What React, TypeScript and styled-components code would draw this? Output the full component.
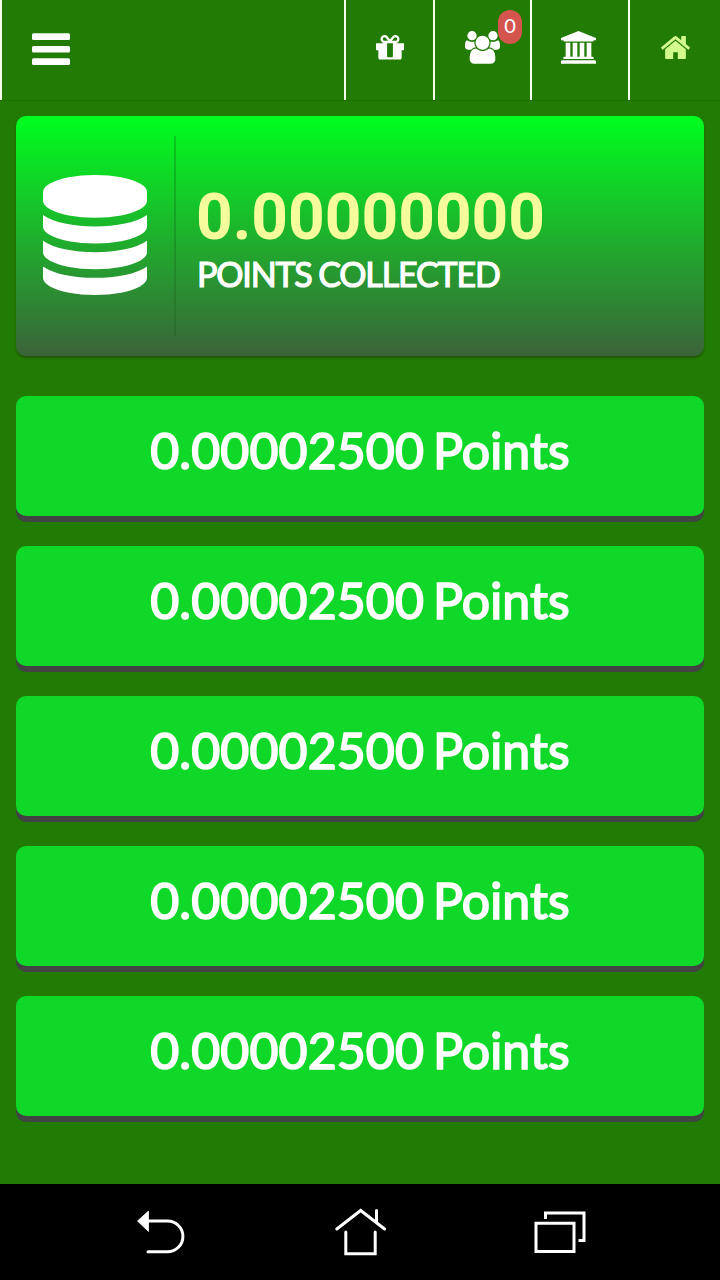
import React from "react";
import styled, { createGlobalStyle } from "styled-components";

const GlobalStyle = createGlobalStyle`
  * { box-sizing: border-box; }
  body { margin: 0; background: #227b04; }
`;

const Screen = styled.div`
  width: 720px;
  height: 1280px;
  display: flex;
  flex-direction: column;
  overflow: hidden;
  background: #227b04;
  color: #fff;
  font-family: Lato, sans-serif;
`;

const Header = styled.header`
  height: 100px;
  flex: none;
  display: flex;
  box-shadow: 0 1px 1px rgba(0, 40, 0, 0.12);
`;

const MenuButton = styled.div`
  flex: 1;
  border-left: 2px solid #f4ffec;
  padding: 33px 0 0 30px;
`;

const Tab = styled.div<{ $width: number; $top: number; $left: number; $active?: boolean }>`
  position: relative;
  width: ${(p) => p.$width}px;
  border-left: 2px solid #f4ffec;
  padding: ${(p) => p.$top}px 0 0 ${(p) => p.$left}px;
  color: ${(p) => (p.$active ? "#d2fa8c" : "#fff")};
`;

const Badge = styled.span`
  position: absolute;
  left: 63px;
  top: 10px;
  width: 24px;
  height: 34px;
  border-radius: 12px;
  background: #d3554d;
  color: #fff;
  font-size: 20px;
  line-height: 30px;
  text-align: center;
`;

const Icon = styled.svg`
  display: block;
  fill: currentColor;
`;

const Main = styled.main`
  flex: 1;
  padding: 16px;
`;

const Card = styled.section`
  height: 240px;
  display: flex;
  padding: 20px 0;
  border-radius: 10px;
  background: linear-gradient(#00ff1f, #3b6339);
  box-shadow: 0 2px 2px rgba(30, 60, 10, 0.6);
`;

const CardIcon = styled.div`
  width: 160px;
  padding: 39px 0 0 27px;
  border-right: 2px solid rgba(20, 90, 20, 0.27);
`;

const CardBody = styled.div`
  padding: 45px 0 0 20px;
`;

const Amount = styled.div`
  font: 700 64px/74px Roboto, sans-serif;
  color: #f5fc9b;
`;

const Caption = styled.div`
  padding-left: 1px;
  font-size: 34px;
  line-height: 38px;
  letter-spacing: -1.15px;
  word-spacing: -1px;
  white-space: nowrap;
  -webkit-text-stroke: 1.2px #fff;
`;

const Rewards = styled.div`
  display: flex;
  flex-direction: column;
  gap: 30px;
  margin-top: 40px;
`;

const Reward = styled.button`
  height: 120px;
  border: 0;
  padding: 0 0 13px;
  border-radius: 10px;
  background: #10d828;
  box-shadow: 0 6px 0 #414443;
  color: #fff;
  font: 400 50px/62px Lato, sans-serif;
  letter-spacing: 0.1px;
  word-spacing: -4px;
  -webkit-text-stroke: 1.7px #fff;
`;

const NavBar = styled.nav`
  height: 96px;
  flex: none;
  display: flex;
  justify-content: space-between;
  align-items: flex-start;
  padding: 24px 132px 0 134px;
  background: #000;
`;

const NavIcon = styled.svg`
  fill: none;
  stroke: #fff;
  stroke-width: 3;
`;

const paths = {
  gift: "M1056 1356v-716h-320v716q0 25 18 38.5t46 13.5h192q28 0 46-13.5t18-38.5zm-456-844h195l-126-161q-26-31-69-31-40 0-68 28t-28 68 28 68 68 28zm688-96q0-40-28-68t-68-28q-43 0-69 31l-125 161h194q40 0 68-28t28-68zm376 256v320q0 14-9 23t-23 9h-96v416q0 40-28 68t-68 28h-1088q-40 0-68-28t-28-68v-416h-96q-14 0-23-9t-9-23v-320q0-14 9-23t23-9h440q-93 0-158.5-65.5t-65.5-158.5 65.5-158.5 158.5-65.5q107 0 168 77l128 165 128-165q61-77 168-77 93 0 158.5 65.5t65.5 158.5-65.5 158.5-158.5 65.5h440q14 0 23 9t9 23z",
  users: "M657 896q-162 5-265 128h-134q-82 0-138-40.5t-56-118.5q0-353 124-353 6 0 43.5 21t97.5 42.5 119 21.5q67 0 133-23-5 37-5 66 0 139 81 256zm1071 637q0 120-73 189.5t-194 69.5h-874q-121 0-194-69.5t-73-189.5q0-53 3.5-103.5t14-109 26.5-108.5 43-97.5 62-81 85.5-53.5 111.5-20q10 0 43 21.5t73 48 107 48 135 21.5 135-21.5 107-48 73-48 43-21.5q61 0 111.5 20t85.5 53.5 62 81 43 97.5 26.5 108.5 14 109 3.5 103.5zm-1024-1277q0 106-75 181t-181 75-181-75-75-181 75-181 181-75 181 75 75 181zm704 384q0 159-112.5 271.5t-271.5 112.5-271.5-112.5-112.5-271.5 112.5-271.5 271.5-112.5 271.5 112.5 112.5 271.5zm576 225q0 78-56 118.5t-138 40.5h-134q-103-123-265-128 81-117 81-256 0-29-5-66 66 23 133 23 59 0 119-21.5t97.5-42.5 43.5-21q124 0 124 353zm-128-609q0 106-75 181t-181 75-181-75-75-181 75-181 181-75 181 75 75 181z",
  bank: "M960 0l960 384v128h-128q0 26-20.5 45t-48.5 19h-1526q-28 0-48.5-19t-20.5-45h-128v-128zm-704 640h256v768h128v-768h256v768h128v-768h256v768h128v-768h256v768h59q28 0 48.5 19t20.5 45v64h-1664v-64q0-26 20.5-45t48.5-19h59v-768zm1595 960q28 0 48.5 19t20.5 45v128h-1920v-128q0-26 20.5-45t48.5-19h1782z",
  home: "M1472 992v480q0 26-19 45t-45 19h-384v-384h-256v384h-384q-26 0-45-19t-19-45v-480q0-1 .5-3t.5-3l575-474 575 474q1 2 1 6zm223-69l-62 74q-8 9-21 11h-3q-13 0-21-7l-692-577-692 577q-12 8-24 7-13-2-21-11l-62-74q-8-10-7-23.5t11-21.5l719-599q32-26 76-26t76 26l244 204v-195q0-14 9-23t23-9h192q14 0 23 9t9 23v408l219 182q10 8 11 21.5t-7 23.5z",
  database: "M896 768q237 0 443-43t325-127v170q0 69-103 128t-280 93.5-385 34.5-385-34.5-280-93.5-103-128v-170q119 84 325 127t443 43zm0 768q237 0 443-43t325-127v170q0 69-103 128t-280 93.5-385 34.5-385-34.5-280-93.5-103-128v-170q119 84 325 127t443 43zm0-384q237 0 443-43t325-127v170q0 69-103 128t-280 93.5-385 34.5-385-34.5-280-93.5-103-128v-170q119 84 325 127t443 43zm0-1152q208 0 385 34.5t280 93.5 103 128v128q0 69-103 128t-280 93.5-385 34.5-385-34.5-280-93.5-103-128v-128q0-69 103-128t280-93.5 385-34.5z",
};

const rewards = Array.from({ length: 5 }, () => "0.00002500 Points");

export default function App() {
  return (
    <Screen>
      <GlobalStyle />
      <Header>
        <MenuButton>
          <Icon width="38" height="32" viewBox="0 0 38 32">
            <rect y="0.3" width="38" height="6.7" rx="1.6" />
            <rect y="12.9" width="38" height="6.7" rx="1.6" />
            <rect y="25.3" width="38" height="6.7" rx="1.6" />
          </Icon>
        </MenuButton>
        <Tab $width={89} $top={35} $left={30}>
          <Icon width="28" height="24.5" viewBox="128 192 1536 1344"><path d={paths.gift} /></Icon>
        </Tab>
        <Tab $width={97} $top={31} $left={30}>
          <Icon width="35" height="32.7" viewBox="64 0 1920 1792"><path d={paths.users} /></Icon>
          <Badge>0</Badge>
        </Tab>
        <Tab $width={98} $top={31} $left={29}>
          <Icon width="35" height="32.7" viewBox="0 0 1920 1792"><path d={paths.bank} /></Icon>
        </Tab>
        <Tab $width={92} $top={36} $left={31} $active>
          <Icon width="29" height="23.2" viewBox="89 253 1614 1283"><path d={paths.home} /></Icon>
        </Tab>
      </Header>
      <Main>
        <Card>
          <CardIcon>
            <Icon width="104" height="120" viewBox="128 0 1536 1792" preserveAspectRatio="none">
              <path d={paths.database} />
            </Icon>
          </CardIcon>
          <CardBody>
            <Amount>0.00000000</Amount>
            <Caption>POINTS COLLECTED</Caption>
          </CardBody>
        </Card>
        <Rewards>
          {rewards.map((label, i) => (
            <Reward key={i}>{label}</Reward>
          ))}
        </Rewards>
      </Main>
      <NavBar>
        <NavIcon width="52" height="50" viewBox="134 1208 52 50">
          <path d="M147 1221h20.5a15.2 15.2 0 0 1 0 30.8h-19.5" strokeLinecap="round" />
          <path d="M148.5 1211v20.5l-11-10.5z" fill="#fff" strokeWidth="0.8" />
        </NavIcon>
        <NavIcon width="54" height="50" viewBox="333 1208 54 50" strokeLinecap="round">
          <path d="M336.8 1229l23.9-18.5 23.9 18.5M376.5 1210.5v12M345.8 1232v21.8h29.4V1232" />
        </NavIcon>
        <NavIcon width="54" height="50" viewBox="534 1208 54 50">
          <path d="M536 1223.2h38v28.3h-38zM545.5 1219v-6h38.5v27.5h-5.5" />
        </NavIcon>
      </NavBar>
    </Screen>
  );
}
